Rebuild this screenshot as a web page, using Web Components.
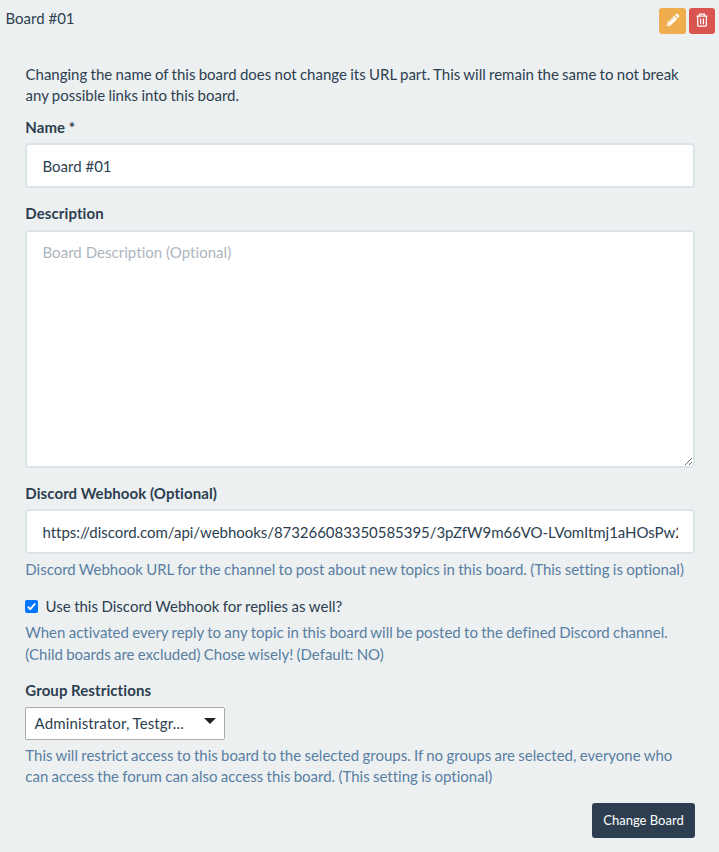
<!DOCTYPE html>
<html lang="en">
<head>
<meta charset="utf-8">
<title>Board #01</title>
<style>
html,body{margin:0;background:#ecf0f1}
body{font:15px/21.43px Lato,"Liberation Sans",sans-serif;font-variant-ligatures:none;word-spacing:-.54px;color:#2c3e50;height:852px;overflow:hidden}
</style>
</head>
<body>
<board-editor></board-editor>
<script>
const define = (name, html, setup) => customElements.define(name, class extends HTMLElement {
  connectedCallback() {
    if (this.shadowRoot) return;
    const t = document.createElement('template');
    t.innerHTML = html;
    this.attachShadow({mode: 'open'}).append(t.content.cloneNode(true));
    if (setup) setup(this, this.shadowRoot);
  }
});

define('icon-button', `<style>
:host{display:flex;align-items:center;justify-content:center;width:27px;height:26px;border-radius:3px;background:var(--tone);color:#fff}
::slotted(svg){display:block;width:14px;height:14px;margin-bottom:2px}
</style><slot></slot>`);

define('board-header', `<style>
:host{display:flex;justify-content:space-between;padding:8px 4px 0 5.5px;height:56px;box-sizing:border-box;word-spacing:0}
.actions{display:flex;gap:3px;align-items:flex-start}
</style><span><slot></slot></span><div class="actions"><slot name="actions"></slot></div>`);

define('form-field', `<style>
:host{display:block;margin-bottom:var(--gap,15px)}
label{display:block;font-weight:700;margin-bottom:var(--label-gap,5px);padding-left:.3px;word-spacing:-.2px;letter-spacing:.09px}
</style><label><slot name="label"></slot></label><slot></slot>`);

define('help-text', `<style>
:host{display:block;color:#597ea2;margin-top:5px;padding-left:.3px}
</style><slot></slot>`);

define('text-box', `<style>
:host{display:block}
input{display:block;box-sizing:border-box;width:100%;height:45px;border:2px solid #dce4e8;border-radius:4px;padding:1px 15px 0 15.5px;background:#fff;font:inherit;word-spacing:0;letter-spacing:var(--track,0);font-variant-ligatures:none;color:inherit;outline:0}
</style><input type="text">`, (h, r) => { r.querySelector('input').value = h.getAttribute('value'); });

define('text-area', `<style>
:host{display:block}
textarea{display:block;box-sizing:border-box;width:100%;height:238px;border:2px solid #dce4e8;border-radius:4px;padding:10px 15px 10px 15.5px;background:#fff;font:inherit;word-spacing:0;letter-spacing:.04px;font-variant-ligatures:none;color:inherit;resize:vertical;outline:0}
textarea::placeholder{color:#acb6c0;opacity:1}
</style><textarea></textarea>`, (h, r) => { r.querySelector('textarea').placeholder = h.getAttribute('placeholder'); });

define('check-row', `<style>
:host{display:flex;align-items:center;gap:7.5px;word-spacing:-.3px}
svg{display:block;width:13px;height:13px}
</style><svg viewBox="0 0 13 13" role="checkbox" aria-checked="true"><rect width="13" height="13" rx="2" fill="#0075ff"/><path d="M2.8 6.8 5.3 9.2 10.2 3.5" fill="none" stroke="#fff" stroke-width="1.9"/></svg><span><slot></slot></span>`);

define('select-box', `<style>
:host{display:flex;align-items:center;justify-content:space-between;box-sizing:border-box;width:200px;height:33px;border:1px solid #aaa;border-radius:2px;background:#fff;padding:0 8.5px 0 8.5px;word-spacing:-.5px;letter-spacing:.14px}
svg{display:block;width:12px;height:6px;margin-bottom:5px;fill:#222}
</style><span><slot></slot></span><svg viewBox="0 0 12 6"><path d="M0 0H12L6 6Z"/></svg>`);

define('submit-button', `<style>
:host{display:flex;align-items:center;justify-content:center;width:103px;height:35px;border-radius:3px;background:#2c3e50;color:#fff;font-size:13px;word-spacing:0}
</style><slot></slot>`);

define('board-editor', `<style>
:host{display:block}
form{padding:8px 24px 0 25px}
p{margin:0 0 10px;padding-left:.5px}
.webhook{--gap:15.5px;--label-gap:4.5px}
.footer{display:flex;justify-content:flex-end;margin-top:15px}
</style>
<board-header>Board #01
<icon-button slot="actions" style="--tone:#f0ad4e" aria-label="Edit"><svg viewBox="0 0 14 14"><path fill="currentColor" d="M.8 13.2 1.5 9.5 8.3 2.7l3 3-6.8 6.8Z"/><path fill="currentColor" d="m9 2 1.1-1.1q.7-.6 1.4 0l1.6 1.6q.6.7 0 1.4L12 5Z"/><path d="m3 9.7 5.4-5.4M2 10.7l1.3 1.3" fill="none" stroke="#f0ad4e" stroke-width=".8"/></svg></icon-button>
<icon-button slot="actions" style="--tone:#d9534f;width:26px" aria-label="Delete"><svg viewBox="0 0 14 14" fill="none" stroke="currentColor" stroke-width="1.25"><path d="M1.4 3.2H12.6M4.5 3V1.2H9.5V3M2.7 3.4V12.5Q2.7 13.2 3.4 13.2H10.6Q11.3 13.2 11.3 12.5V3.4M5.6 5.4V11.2M8.4 5.4V11.2"/></svg></icon-button>
</board-header>
<form>
<p>Changing the name of this board does not change its URL part. This will remain the same to not break any possible links into this board.</p>
<form-field><span slot="label">Name *</span><text-box value="Board #01"></text-box></form-field>
<form-field><span slot="label">Description</span><text-area placeholder="Board Description (Optional)"></text-area></form-field>
<form-field class="webhook"><span slot="label">Discord Webhook (Optional)</span><text-box style="--track:-.045px" value="https://discord.com/api/webhooks/873266083350585395/3pZfW9m66VO-LVomItmj1aHOsPw2"></text-box><help-text>Discord Webhook URL for the channel to post about new topics in this board. (This setting is optional)</help-text></form-field>
<check-row>Use this Discord Webhook for replies as well?</check-row>
<help-text style="margin-bottom:15px">When activated every reply to any topic in this board will be posted to the defined Discord channel. (Child boards are excluded) Chose wisely! (Default: NO)</help-text>
<form-field><span slot="label">Group Restrictions</span><select-box style="margin-top:5.5px">Administrator, Testgr...</select-box><help-text>This will restrict access to this board to the selected groups. If no groups are selected, everyone who can access the forum can also access this board. (This setting is optional)</help-text></form-field>
<div class="footer"><submit-button>Change Board</submit-button></div>
</form>`);
</script>
</body>
</html>
